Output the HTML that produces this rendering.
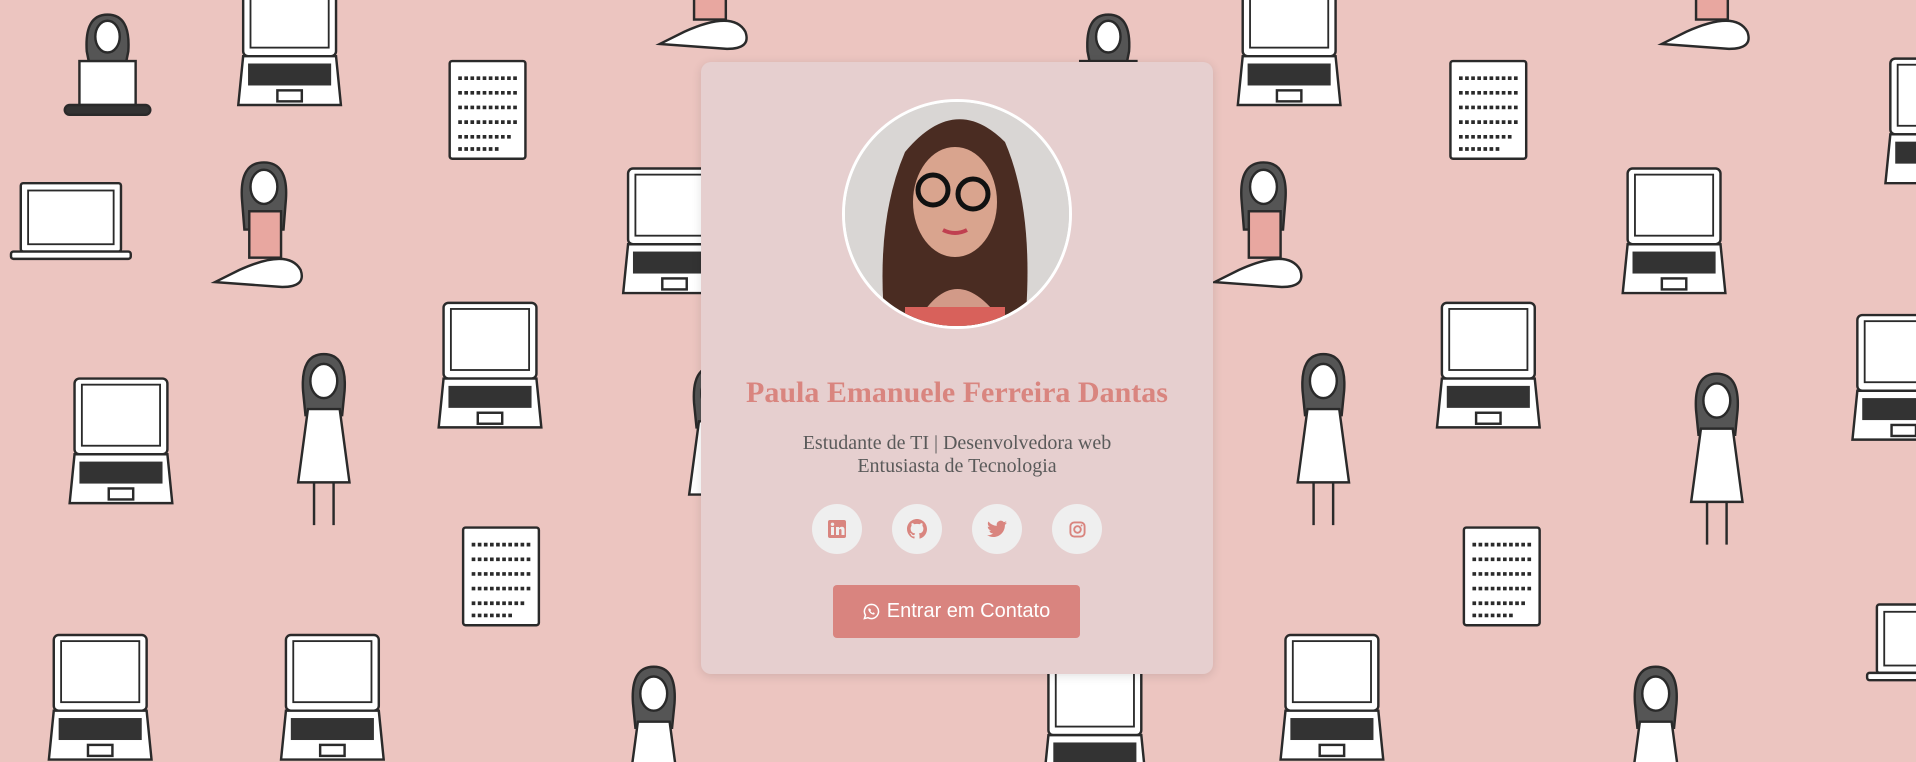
<!DOCTYPE html>
<html><head><meta charset="utf-8"><style>
html,body{margin:0;padding:0;width:1916px;height:762px;overflow:hidden;}
body{background:#ecc5c0;position:relative;font-family:"Liberation Serif",serif;}
#bg{position:absolute;left:0;top:0;display:block;}
.card{position:absolute;left:701px;top:62px;width:512px;height:612px;background:#e6cfcf;border-radius:10px;box-shadow:0 2px 10px rgba(0,0,0,0.12);}
.photo{position:absolute;left:141px;top:37px;width:224px;height:224px;border-radius:50%;border:3px solid #fff;overflow:hidden;background:#d8d4d2;}
.name{position:absolute;left:0;width:512px;top:314px;text-align:center;color:#d9857f;font-weight:bold;font-size:30px;}
.sub{position:absolute;left:0;width:512px;top:370px;text-align:center;color:#5a5a5a;font-size:20px;line-height:23px;}
.ic{position:absolute;top:442px;width:50px;height:50px;border-radius:50%;background:#efefef;display:flex;align-items:center;justify-content:center;}
.btn{position:absolute;left:132px;top:523px;width:247px;height:53px;background:#d9847f;border-radius:4px;color:#fff;font-family:"Liberation Sans",sans-serif;font-size:20px;display:flex;align-items:center;justify-content:center;gap:7px;}
</style></head><body>
<svg id="bg" width="1916" height="762" viewBox="0 0 1568 624" preserveAspectRatio="none">
<defs>
<g id="lap" stroke="#2a2a2a" stroke-width="2" fill="#fff">
<rect x="2" y="0" width="76" height="62" rx="4"/><rect x="8" y="5" width="64" height="50" stroke-width="1.5"/>
<path d="M2 62 L-2 102 L82 102 L78 62 Z"/>
<rect x="6" y="68" width="68" height="18" fill="#333" stroke="none"/>
<rect x="30" y="90" width="20" height="9"/>
</g>
<g id="flat" stroke="#2a2a2a" stroke-width="2" fill="#fff">
<rect x="8" y="0" width="82" height="56" rx="2"/><rect x="14" y="6" width="70" height="44" stroke-width="1.5"/>
<rect x="0" y="56" width="98" height="6" rx="2"/>
</g>
<g id="paper" stroke="#2a2a2a" stroke-width="2" fill="#fff">
<rect x="0" y="0" width="62" height="80" rx="2"/>
<g stroke-width="3" stroke-dasharray="3 2"><path d="M7 14H56M7 26H56M7 38H56M7 50H56M7 62H50M7 72H40"/></g>
</g>
<g id="stand" stroke="#2a2a2a" stroke-width="2" fill="#fff">
<path d="M8 30 Q6 0 25 0 Q44 0 42 30 L40 50 L10 50 Z" fill="#555"/>
<ellipse cx="25" cy="22" rx="11" ry="14"/>
<path d="M12 45 L38 45 L46 105 L4 105 Z"/>
<path d="M17 105 L17 140 M33 105 L33 140"/>
</g>
<g id="sit" stroke="#2a2a2a" stroke-width="2" fill="#fff">
<path d="M22 30 Q20 0 40 0 Q60 0 58 30 L56 55 L24 55 Z" fill="#555"/>
<ellipse cx="40" cy="20" rx="11" ry="14"/>
<rect x="28" y="40" width="26" height="38" fill="#e8a7a0"/>
<path d="M0 98 L20 88 Q60 70 70 88 Q75 102 55 102 Z"/>
</g>
<g id="glap" stroke="#2a2a2a" stroke-width="2" fill="#fff">
<path d="M18 30 Q16 0 35 0 Q54 0 52 30 L50 40 L20 40 Z" fill="#555"/>
<ellipse cx="35" cy="18" rx="10" ry="13"/>
<rect x="12" y="38" width="46" height="36"/>
<rect x="0" y="74" width="70" height="8" rx="4" fill="#333"/>
</g>
</defs>
<use href="#lap" x="197" y="-16"/><use href="#lap" x="512" y="138"/><use href="#lap" x="59" y="310"/><use href="#lap" x="361" y="248"/><use href="#lap" x="42" y="520"/><use href="#lap" x="232" y="520"/>
<use href="#lap" x="1015" y="-16"/><use href="#lap" x="1330" y="138"/><use href="#lap" x="1178" y="248"/><use href="#lap" x="1050" y="520"/><use href="#lap" x="1518" y="258"/><use href="#lap" x="1545" y="48"/><use href="#lap" x="856" y="540"/>
<use href="#flat" x="9" y="150"/><use href="#flat" x="1528" y="495"/>
<use href="#paper" x="368" y="50"/><use href="#paper" x="379" y="432"/><use href="#paper" x="1187" y="50"/><use href="#paper" x="1198" y="432"/>
<use href="#stand" x="240" y="290"/><use href="#stand" x="1058" y="290"/><use href="#stand" x="1380" y="306"/><use href="#stand" x="560" y="300"/>
<use href="#sit" x="176" y="133"/><use href="#sit" x="994" y="133"/>
<use href="#glap" x="53" y="12"/><use href="#glap" x="872" y="12"/>
<use href="#stand" x="510" y="546"/><use href="#stand" x="1330" y="546"/>
<use href="#sit" x="540" y="-62"/><use href="#sit" x="1360" y="-62"/>
</svg>
<div class="card">
<div class="photo"><svg width="224" height="224" viewBox="0 0 224 224">
<rect width="224" height="224" fill="#d9d6d4"/>
<path d="M40 224 Q30 120 60 50 Q110 -10 160 40 Q190 110 180 224 Z" fill="#4a2c22"/>
<ellipse cx="110" cy="100" rx="42" ry="55" fill="#d9a48e"/>
<path d="M70 224 Q110 150 160 224 Z" fill="#d29a88"/>
<rect x="60" y="205" width="100" height="20" fill="#d8615b"/>
<circle cx="88" cy="88" r="15" fill="none" stroke="#111" stroke-width="5"/><circle cx="128" cy="92" r="15" fill="none" stroke="#111" stroke-width="5"/>
<path d="M98 128 Q110 134 122 128" stroke="#c04050" stroke-width="4" fill="none"/>
</svg></div>
<div class="name">Paula Emanuele Ferreira Dantas</div>
<div class="sub">Estudante de TI | Desenvolvedora web<br>Entusiasta de Tecnologia</div>
<div class="ic" style="left:111px"><svg width="18" height="18" viewBox="0 0 18 18"><rect width="18" height="18" rx="2" fill="#d9857f"/><rect x="3" y="7" width="3" height="8" fill="#efefef"/><circle cx="4.5" cy="4.3" r="1.7" fill="#efefef"/><path d="M8 7h3v1.3q1-1.5 3-1.5q2.5 0 2.5 3V15h-3v-4.5q0-1.5-1.3-1.5T11 10.5V15H8z" fill="#efefef"/></svg></div>
<div class="ic" style="left:191px"><svg width="20" height="20" viewBox="0 0 16 16"><path fill="#d9857f" d="M8 0C3.58 0 0 3.58 0 8c0 3.54 2.29 6.530 5.47 7.590.4.07.55-.17.55-.38v-1.33c-2.23.48-2.7-1.07-2.7-1.07-.36-.92-.89-1.17-.89-1.17-.73-.5.06-.49.06-.49.8.06 1.230.83 1.230.83.71 1.230 1.870.87 2.330.67.07-.52.28-.87.5-1.07-1.78-.2-3.64-.89-3.64-3.950 0-.87.31-1.59.82-2.150-.08-.2-.36-1.020.08-2.120 0 0 .67-.21 2.200.82.64-.18 1.320-.27 2-.27.68 0 1.360.09 2 .27 1.530-1.040 2.200-.82 2.200-.82.44 1.100.16 1.920.08 2.120.51.56.82 1.270.82 2.150 0 3.070-1.870 3.750-3.650 3.950.29.25.54.73.54 1.480v2.200c0 .21.15.46.55.38A8.01 8.01 0 0016 8c0-4.420-3.580-8-8-8z"/></svg></div>
<div class="ic" style="left:271px"><svg width="20" height="18" viewBox="0 0 24 20"><path fill="#d9857f" d="M24 2.4a9.8 9.8 0 01-2.8.8A4.9 4.9 0 0023.3.5a9.9 9.9 0 01-3.1 1.2A4.9 4.9 0 0011.8 6.2 14 14 0 011.7 1a4.9 4.9 0 001.5 6.6A4.9 4.9 0 01.9 7v.1a4.9 4.9 0 004 4.8 4.9 4.9 0 01-2.2.1 4.9 4.9 0 004.6 3.4A9.9 9.9 0 010 17.4 14 14 0 007.5 19.6c9 0 14-7.5 14-14v-.6A10 10 0 0024 2.4z"/></svg></div>
<div class="ic" style="left:351px"><svg width="17" height="17" viewBox="0 0 18 18"><rect x="1.5" y="1.5" width="15" height="15" rx="4" fill="none" stroke="#d9857f" stroke-width="2"/><circle cx="9" cy="9" r="3.5" fill="none" stroke="#d9857f" stroke-width="2"/><circle cx="13.3" cy="4.7" r="1" fill="#d9857f"/></svg></div>
<div class="btn"><svg width="17" height="17" viewBox="0 0 18 18"><path d="M9 1.5a7.5 7.5 0 00-6.4 11.4L1.5 16.5l3.7-1A7.5 7.5 0 109 1.5z" fill="none" stroke="#fff" stroke-width="1.6"/><path d="M6.2 5.5q-.9.8-.4 2.3 1.2 3 4.3 4.3 1.5.5 2.3-.4l-.3-1.2-1.4-.6-.7.8Q8.5 10 7.8 8.5l.7-.8-.6-1.4z" fill="#fff"/></svg>Entrar em Contato</div>
</div>
</body></html>
